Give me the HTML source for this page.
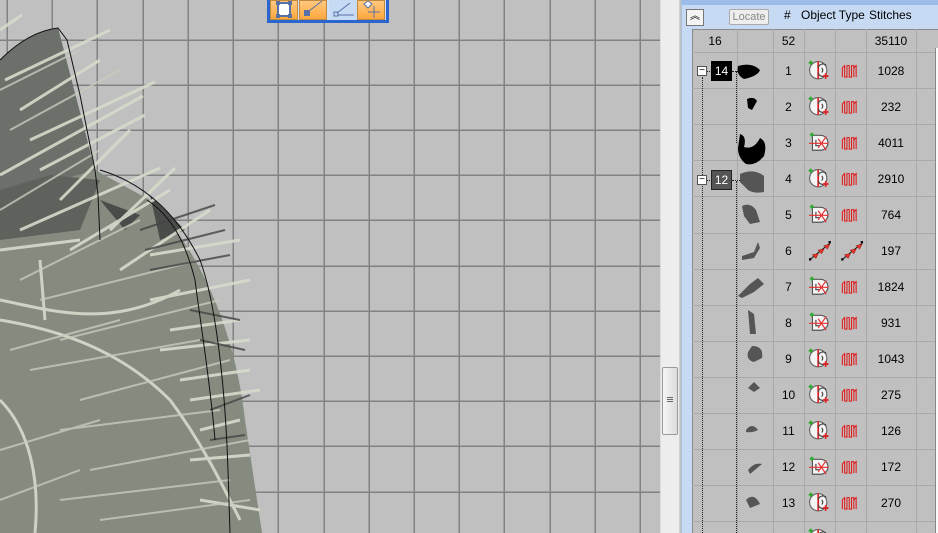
<!DOCTYPE html>
<html><head><meta charset="utf-8"><style>
*{margin:0;padding:0;box-sizing:border-box}
body{width:938px;height:533px;overflow:hidden;position:relative;background:#c0c0c0;font-family:"Liberation Sans",sans-serif}
#sb{position:absolute;left:660px;top:0;width:20px;height:533px;background:#ededed;border-left:1px solid #ddd;border-right:1px solid #d0d0d0}
#thumb{position:absolute;left:662px;top:367px;width:16px;height:68px;border:1px solid #9a9a9a;border-radius:2px;background:linear-gradient(to right,#f6f6f6,#dcdcdc)}
#panel{position:absolute;left:681px;top:0;width:257px;height:533px;background:#c6daf4;border-left:1px solid #a9bfdc}
#tb{position:absolute;left:681px;top:0;width:257px;height:5px;background:#9cbde8}
#grid{position:absolute;left:692px;top:29px;width:246px;height:504px;background:#c0c0c0;border-left:1px solid #8a8a8a;border-top:1px solid #8a8a8a}
.hdr{position:absolute;top:8px;font-size:12px;color:#000}
.vl{position:absolute;top:29px;width:1px;height:504px;background:#a9a9a9}
.hl{position:absolute;left:692px;width:243px;height:1px;background:#a9a9a9}
.t{position:absolute;font-size:12px;color:#000;text-align:center}
.dv{position:absolute;border-left:1px dotted #222}
.dh{position:absolute;border-top:1px dotted #222;height:0}
.btn{position:absolute;top:0;width:28px;height:20px;background:linear-gradient(#ffc880,#ffa83c);border:1px solid #c08a40}
</style></head><body>
<svg style="position:absolute;left:0;top:0" width="660" height="533" shape-rendering="crispEdges">
<rect width="660" height="533" fill="#c0c0c0"/>
<g stroke="#828282" stroke-width="1.5">
<path d="M7,0V533M52,0V533M97,0V533M143,0V533M188,0V533M233,0V533M278,0V533M324,0V533M369,0V533M414,0V533M459,0V533M504,0V533M550,0V533M595,0V533M640,0V533"/>
<path d="M0,40H660M0,85H660M0,130H660M0,175H660M0,220H660M0,266H660M0,311H660M0,356H660M0,401H660M0,446H660M0,492H660"/>
</g>
</svg>
<svg style="position:absolute;left:0;top:0" width="660" height="533">
<path d="M0,60 C20,40 40,30 58,28 L95,170 L150,200 C200,250 235,330 245,420 L262,533 L0,533 Z" fill="#868b80"/>
<path d="M0,60 C20,40 40,30 58,28 L95,170 L60,180 L0,195 Z" fill="#6b706a"/>
<path d="M0,190 L50,175 L100,180 L80,230 L0,240Z" fill="#5d625c"/>
<path d="M100,200 L140,215 L125,230Z M150,195 L185,230 L160,240Z" fill="#4a4c4a"/>
<g stroke="#d5dccb" stroke-width="3" fill="none" opacity=".9">
<path d="M0,30 L22,15 M5,80 L110,30 M20,110 L100,60 M30,140 L155,82 M40,170 L145,115 M0,175 L143,96 M60,200 L130,130 M20,230 L160,168 M70,250 L170,190 M110,230 L175,168 M120,270 L210,210 M150,255 L240,240 M150,300 L250,280 M170,330 L240,320 M160,350 L250,340 M180,380 L250,370 M190,400 L260,390 M200,430 L240,420 M190,460 L250,455 M200,500 L260,510 M0,320 C60,330 120,350 170,400 C200,440 220,480 240,520 M0,300 C50,310 110,330 180,290 M0,400 C30,430 40,480 35,533 M40,260 L45,320 M0,250 L80,240"/>
</g>
<g stroke="#c5ccbb" stroke-width="2" fill="none" opacity=".8">
<path d="M0,90 L80,50 M10,130 L120,70 M0,210 L100,150 M20,280 L140,220 M40,300 L200,260 M60,340 L220,300 M30,370 L200,340 M80,400 L230,360 M60,430 L220,410 M90,470 L250,440 M60,500 L230,480 M100,520 L250,500 M0,450 L100,420 M0,500 L80,470 M10,350 L120,320"/>
</g>
<g stroke="#444" stroke-width="2" opacity=".8">
<path d="M140,230 L215,205 M145,250 L225,230 M150,270 L230,255 M190,310 L240,320 M200,340 L245,350 M210,410 L250,395 M210,440 L245,435"/>
</g>
<g stroke="#111" stroke-width="1" fill="none">
<path d="M0,60 C20,40 40,30 58,28 L67,40 L80,95 L95,170 L98,195 L100,240"/>
<path d="M100,170 C150,185 180,220 200,260 C215,300 225,380 228,470 L230,533"/>
<path d="M147,200 C170,215 185,240 195,280 C200,320 210,380 215,440"/>
</g>
</svg>
<div style="position:absolute;left:267px;top:0;width:122px;height:23px;background:#cfe0f7;border:3px solid #2b66cf;border-top:none"></div>
<div class="btn" style="left:270px"><svg width="26" height="18"><rect x="7" y="2" width="12" height="13" fill="#fff" stroke="#5870a8" stroke-width="2"/><rect x="5" y="0" width="4" height="4" fill="#5870a8"/><rect x="17" y="0" width="4" height="4" fill="#5870a8"/><rect x="5" y="13" width="4" height="4" fill="#5870a8"/><rect x="17" y="13" width="4" height="4" fill="#5870a8"/></svg></div>
<div class="btn" style="left:299px"><svg width="26" height="18"><rect x="4" y="9" width="6" height="6" fill="#5870a8"/><path d="M9,10 L22,0" stroke="#5870a8"/></svg></div>
<div class="btn" style="left:329px;background:#c7dbf5;border-color:#c7dbf5"><svg width="26" height="18"><rect x="4" y="11" width="4" height="4" fill="none" stroke="#5870a8"/><path d="M7,12 L20,2 M8,14 L24,14" stroke="#5870a8"/></svg></div>
<div class="btn" style="left:357px"><svg width="26" height="18"><path d="M6,3 L10,0 L14,3 L10,7Z" fill="#fff" stroke="#5870a8"/><path d="M16,5 V17 M10,11 H22" stroke="#5870a8"/></svg></div>
<div id="sb"></div><div id="thumb"><div style="position:absolute;left:4px;top:29px;width:6px;height:5px;border-top:1px solid #666;border-bottom:1px solid #666"></div><div style="position:absolute;left:4px;top:31px;width:6px;height:1px;background:#666"></div></div>
<div id="panel"></div><div id="tb"></div>
<div style="position:absolute;left:686px;top:9px;width:18px;height:17px;border:1px solid #777;background:#f4f4f4;font-size:10px;text-align:center;line-height:14px">︽</div>
<div style="position:absolute;left:729px;top:9px;width:40px;height:16px;border:1px solid #aaa;border-radius:2px;background:#eee;font-size:11px;color:#888;text-align:center;line-height:14px">Locate</div>
<div class="hdr" style="left:784px">#</div>
<div class="hdr" style="left:801px">Object Type</div>
<div class="hdr" style="left:869px">Stitches</div>
<div id="grid"></div>
<div style="position:absolute;left:935px;top:48px;width:3px;height:485px;background:#fafafa;border-left:1px solid #888"></div>
<div class="vl" style="left:737px"></div><div class="vl" style="left:773px"></div><div class="vl" style="left:804px"></div><div class="vl" style="left:835px"></div><div class="vl" style="left:866px"></div><div class="vl" style="left:916px"></div>
<div class="hl" style="top:52px"></div><div class="hl" style="top:88px"></div><div class="hl" style="top:124px"></div><div class="hl" style="top:160px"></div><div class="hl" style="top:196px"></div><div class="hl" style="top:233px"></div><div class="hl" style="top:269px"></div><div class="hl" style="top:305px"></div><div class="hl" style="top:341px"></div><div class="hl" style="top:377px"></div><div class="hl" style="top:413px"></div><div class="hl" style="top:449px"></div><div class="hl" style="top:485px"></div><div class="hl" style="top:521px"></div>
<div class="t" style="left:700px;top:34px;width:30px">16</div>
<div class="t" style="left:773px;top:34px;width:31px">52</div>
<div class="t" style="left:866px;top:34px;width:50px">35110</div>
<div class="dv" style="left:702px;top:77px;height:456px"></div>
<div class="dv" style="left:736px;top:71px;height:72px"></div>
<div class="dv" style="left:736px;top:181px;height:352px"></div>
<div class="dh" style="left:706px;top:71px;width:6px"></div><div class="dh" style="left:732px;top:71px;width:10px"></div>
<div class="dh" style="left:706px;top:180px;width:6px"></div><div class="dh" style="left:732px;top:180px;width:10px"></div>
<div style="position:absolute;left:697px;top:66px;width:10px;height:10px;background:#fff;border:1px solid #555;font-size:10px;line-height:7px;text-align:center">−</div>
<div style="position:absolute;left:697px;top:175px;width:10px;height:10px;background:#fff;border:1px solid #555;font-size:10px;line-height:7px;text-align:center">−</div>
<div style="position:absolute;left:711px;top:61px;width:21px;height:20px;background:#000;color:#fff;font-size:12px;text-align:center;line-height:20px">14</div>
<div style="position:absolute;left:711px;top:170px;width:21px;height:20px;background:#555;border:1px solid #222;color:#fff;font-size:12px;text-align:center;line-height:18px">12</div>
<svg style="position:absolute;left:692px;top:52px" width="246" height="481">
<defs>
<g id="A"><circle cx="8" cy="8" r="7.5" fill="#f4f4f4" stroke="#666"/><path d="M8,0.5 V15.5" stroke="#e02020" stroke-width="1.5"/><path d="M15,4 A4,4 0 0 0 8,6 M15,12 A4,4 0 0 1 8,10 M11,6 Q13,8 11,10" stroke="#444" fill="none"/><rect x="0" y="0" width="3" height="3" fill="#3a3" transform="rotate(45 1.5 1.5)"/><path d="M12,13 H17 M14.5,10.5 V15.5" stroke="#e02020" stroke-width="1.5"/></g>
<g id="B"><path d="M3,2 H10 A6,6 0 0 1 10,15 H3 Z" fill="#f4f4f4" stroke="#555"/><path d="M6,6 V11 H9" stroke="#444" fill="none"/><path d="M0,9 H17 M8,13 L15,3 M8,5 L15,15" stroke="#e83030"/><rect x="1" y="0" width="3" height="3" fill="#3a3" transform="rotate(45 2.5 1.5)"/></g>
<g id="C"><path d="M1,16 L18,2" stroke="#222"/><path d="M3,12 l5,-1 l-2,4z M8,8 l5,-1 l-2,4z M13,4 l5,-1 l-2,4z" fill="#e83a2a" stroke="#a11" stroke-width=".5"/><rect x="0" y="15" width="2" height="2" fill="#000"/><rect x="17" y="0" width="2" height="2" fill="#000"/></g>
<g id="S" stroke="#e01818" fill="none" stroke-width="0.9"><path d="M1,6 V14 M1,6 L3,4 V14 H5 V4 H7 V14 H9 V4 H11 V14 M11,6 L13,4 V14"/></g>
</defs>
<g fill="#000"><path d="M46,14 Q60,10 68,18 Q66,24 52,27 Q44,23 46,14Z"/><path d="M55,47 Q62,44 65,49 L60,58 L56,56Z"/><path d="M48,82 Q55,84 52,95 Q62,98 68,86 Q76,90 72,104 Q64,114 54,112 Q46,106 46,96Z"/></g>
<g fill="#555"><path d="M48,122 Q62,116 72,124 L72,140 Q62,142 56,138 L48,130Z"/><path d="M50,154 Q58,150 64,158 L68,170 L58,172 L52,164Z"/><path d="M50,204 L62,200 L66,190 L68,196 L62,206 L50,208Z"/><path d="M46,244 L58,232 L66,226 L72,232 L62,240 L50,246Z"/><path d="M56,258 L62,262 L64,282 L58,282Z"/><path d="M60,294 Q72,294 70,306 L62,310 Q54,308 56,300Z"/><path d="M56,336 L62,330 L68,336 L62,340Z"/><path d="M54,378 Q60,370 66,378 Q60,381 54,380Z"/><path d="M56,418 Q62,410 70,412 L58,422Z"/><path d="M54,448 Q62,440 68,452 L58,456Z"/></g>
<g transform="translate(117,9) scale(1.15)"><use href="#A"/><use href="#S" x="28"/></g>
<g transform="translate(117,45) scale(1.15)"><use href="#A"/><use href="#S" x="28"/></g>
<g transform="translate(117,81) scale(1.15)"><use href="#B"/><use href="#S" x="28"/></g>
<g transform="translate(117,117) scale(1.15)"><use href="#A"/><use href="#S" x="28"/></g>
<g transform="translate(117,153) scale(1.15)"><use href="#B"/><use href="#S" x="28"/></g>
<g transform="translate(117,189) scale(1.15)"><use href="#C"/><use href="#C" x="28"/></g>
<g transform="translate(117,225) scale(1.15)"><use href="#B"/><use href="#S" x="28"/></g>
<g transform="translate(117,261) scale(1.15)"><use href="#B"/><use href="#S" x="28"/></g>
<g transform="translate(117,297) scale(1.15)"><use href="#A"/><use href="#S" x="28"/></g>
<g transform="translate(117,333) scale(1.15)"><use href="#A"/><use href="#S" x="28"/></g>
<g transform="translate(117,369) scale(1.15)"><use href="#A"/><use href="#S" x="28"/></g>
<g transform="translate(117,405) scale(1.15)"><use href="#B"/><use href="#S" x="28"/></g>
<g transform="translate(117,441) scale(1.15)"><use href="#A"/><use href="#S" x="28"/></g>
<g transform="translate(117,477) scale(1.15)"><use href="#A"/></g>
</svg>
<div class="t" style="left:773px;top:64px;width:31px">1</div><div class="t" style="left:866px;top:64px;width:50px">1028</div>
<div class="t" style="left:773px;top:100px;width:31px">2</div><div class="t" style="left:866px;top:100px;width:50px">232</div>
<div class="t" style="left:773px;top:136px;width:31px">3</div><div class="t" style="left:866px;top:136px;width:50px">4011</div>
<div class="t" style="left:773px;top:172px;width:31px">4</div><div class="t" style="left:866px;top:172px;width:50px">2910</div>
<div class="t" style="left:773px;top:208px;width:31px">5</div><div class="t" style="left:866px;top:208px;width:50px">764</div>
<div class="t" style="left:773px;top:244px;width:31px">6</div><div class="t" style="left:866px;top:244px;width:50px">197</div>
<div class="t" style="left:773px;top:280px;width:31px">7</div><div class="t" style="left:866px;top:280px;width:50px">1824</div>
<div class="t" style="left:773px;top:316px;width:31px">8</div><div class="t" style="left:866px;top:316px;width:50px">931</div>
<div class="t" style="left:773px;top:352px;width:31px">9</div><div class="t" style="left:866px;top:352px;width:50px">1043</div>
<div class="t" style="left:773px;top:388px;width:31px">10</div><div class="t" style="left:866px;top:388px;width:50px">275</div>
<div class="t" style="left:773px;top:424px;width:31px">11</div><div class="t" style="left:866px;top:424px;width:50px">126</div>
<div class="t" style="left:773px;top:460px;width:31px">12</div><div class="t" style="left:866px;top:460px;width:50px">172</div>
<div class="t" style="left:773px;top:496px;width:31px">13</div><div class="t" style="left:866px;top:496px;width:50px">270</div>
</body></html>
